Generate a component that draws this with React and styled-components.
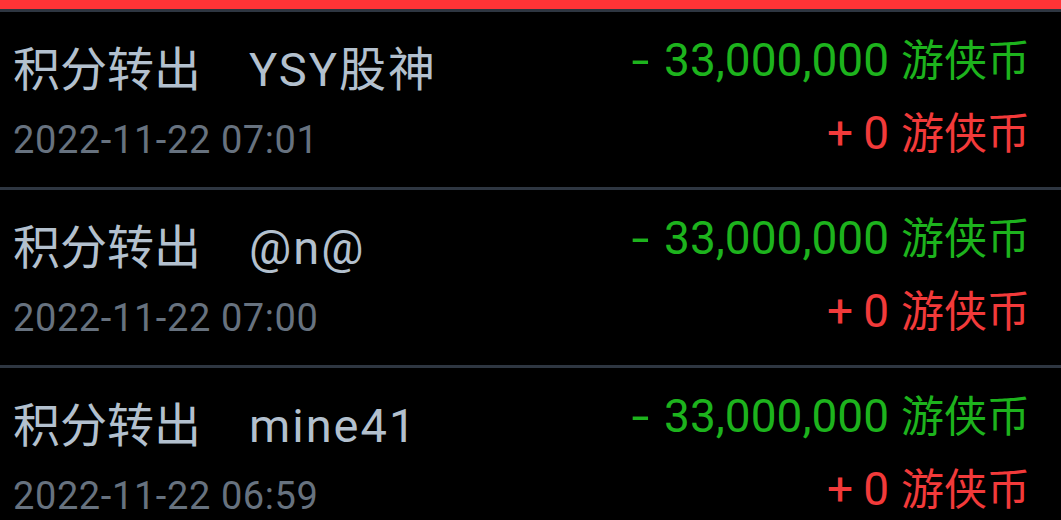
import React from 'react';
import styled, { createGlobalStyle } from 'styled-components';

const GlobalStyle = createGlobalStyle`
  html, body {
    margin: 0;
    padding: 0;
    background: #000;
  }
  body {
    font-family: Roboto, "Noto Sans CJK SC", sans-serif;
  }
`;

const records = [
  { name: 'YSY股神', time: '2022-11-22 07:01', out: '33,000,000', back: '0' },
  { name: '@n@', time: '2022-11-22 07:00', out: '33,000,000', back: '0' },
  { name: 'mine41', time: '2022-11-22 06:59', out: '33,000,000', back: '0' },
];

export default function App() {
  return (
    <Page>
      <GlobalStyle />
      <TopBar />
      <List>
        {records.map((r) => (
          <Row key={r.time}>
            <Left>
              <Title>
                积分转出<Name>{r.name}</Name>
              </Title>
              <Time>{r.time}</Time>
            </Left>
            <Right>
              <Amount $color="#1db31d">
                <Sign $gap="17px" $stretch>-</Sign>
                <span>{r.out}</span>
                <Unit>游侠币</Unit>
              </Amount>
              <Amount $color="#f23a3a" $second>
                <Sign $gap="10px">+</Sign>
                <span>{r.back}</span>
                <Unit>游侠币</Unit>
              </Amount>
            </Right>
          </Row>
        ))}
      </List>
    </Page>
  );
}

const Page = styled.div`
  width: 1061px;
  height: 520px;
  overflow: hidden;
  background: #000;
`;
const TopBar = styled.div`
  height: 9px;
  background: #ff3336;
`;
const List = styled.div`
  border-top: 3px solid #2e3641;
`;
const Row = styled.div`
  display: flex;
  justify-content: space-between;
  height: 178px;
  box-sizing: border-box;
  padding: 0 31px 0 13px;
  border-bottom: 3px solid #2e3641;
`;
const Left = styled.div`
  display: flex;
  flex-direction: column;
  padding-top: 28px;
`;
const Title = styled.div`
  font-size: 47px;
  line-height: 60px;
  color: #b3c0ce;
  white-space: nowrap;
`;
const Name = styled.span`
  margin-left: 48px;
  letter-spacing: 2px;
`;
const Time = styled.div`
  font-size: 38px;
  line-height: 48px;
  letter-spacing: 0.6px;
  color: #67727f;
  margin-top: 16px;
`;
const Right = styled.div`
  display: flex;
  flex-direction: column;
  align-items: flex-end;
  padding-top: 20px;
`;
const Amount = styled.div`
  display: flex;
  align-items: baseline;
  font-size: 46px;
  line-height: 56px;
  color: ${(p) => p.$color};
  white-space: nowrap;
  margin-top: ${(p) => (p.$second ? '16px' : '0')};
`;
const Sign = styled.span`
  display: inline-block;
  margin-right: ${(p) => p.$gap};
  transform: ${(p) => (p.$stretch ? 'scaleX(1.4)' : 'none')};
`;
const Unit = styled.span`
  font-size: 43px;
  margin-left: 12px;
`;
